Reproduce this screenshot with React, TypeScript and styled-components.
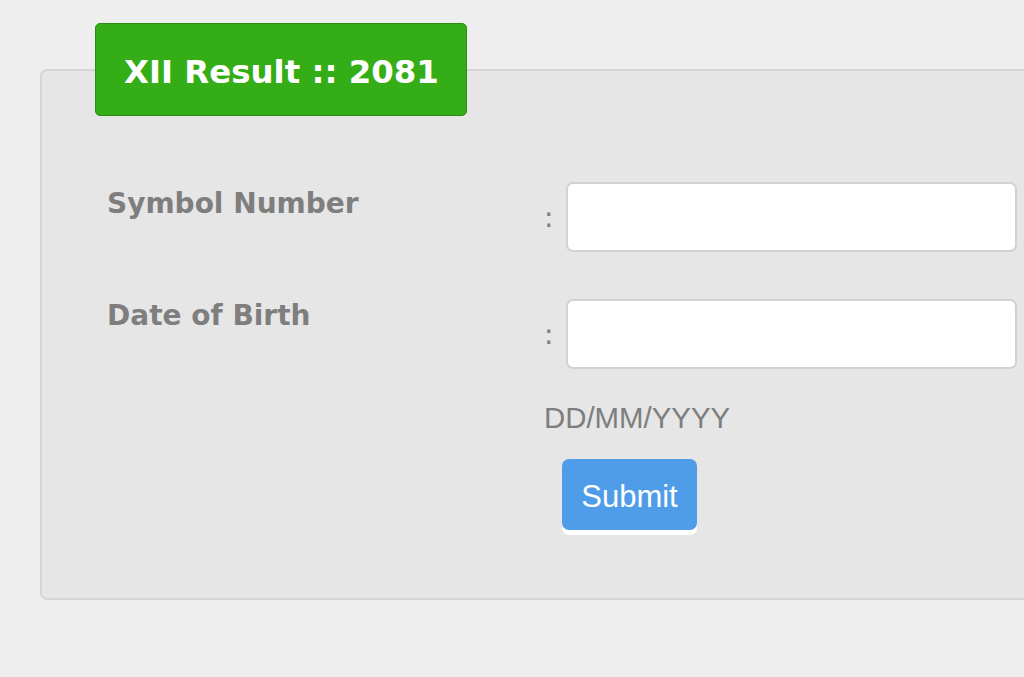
import styled, { createGlobalStyle } from "styled-components";

const GlobalStyle = createGlobalStyle`
   html, body {
      margin: 0;
      padding: 0;
      background: #eeeeee;
      overflow: hidden;
   }
   body {
      font-family: "Liberation Sans", Arial, sans-serif;
   }
`;

const Page = styled.div`
   width: 1024px;
   height: 677px;
   padding-top: 23px;
   box-sizing: border-box;
`;

const Box = styled.fieldset`
   margin: 0 0 0 40px;
   padding: 66px 0 68px 65px;
   width: 1100px;
   box-sizing: border-box;
   background: #e6e6e6;
   border: 2px solid #d5d5d5;
   border-radius: 7px;
   min-width: 0;
`;

const Title = styled.legend`
   margin-left: -12px;
   padding: 30px 27px 25px 28px;
   background: #35ad17;
   border: 1px solid #2a8c12;
   border-radius: 5px;
   color: #ffffff;
   font-family: "DejaVu Sans", Verdana, sans-serif;
   font-weight: bold;
   font-size: 32.4px;
   line-height: 36px;
   white-space: nowrap;
`;

const FormGrid = styled.div`
   display: grid;
   grid-template-columns: 437px 22px 451px;
   row-gap: 47px;
   align-items: start;
`;

const Label = styled.label<{ $offset: number }>`
   padding-top: ${(p) => p.$offset}px;
   color: #7e7e7e;
   font-family: "DejaVu Sans", Verdana, sans-serif;
   font-weight: bold;
   font-size: 28px;
   line-height: 34px;
`;

const Colon = styled.span`
   padding-top: 20px;
   color: #7e7e7e;
   font-family: "DejaVu Sans", Verdana, sans-serif;
   font-size: 28px;
   line-height: 32px;
`;

const Input = styled.input`
   display: block;
   width: 451px;
   height: 70px;
   box-sizing: border-box;
   background: #ffffff;
   border: 2px solid #d2d2d2;
   border-radius: 7px;
   padding: 0 12px;
   font-size: 26px;
   outline: none;
`;

const Actions = styled.div`
   grid-column: 2 / 4;
   margin-top: -15px;
   display: flex;
   flex-direction: column;
   align-items: flex-start;
`;

const Hint = styled.span`
   color: #7e7e7e;
   font-size: 29.4px;
   line-height: 34px;
`;

const SubmitButton = styled.button`
   margin: 24px 0 0 18px;
   width: 135px;
   height: 71px;
   padding: 4px 0 0;
   background: #4f9de9;
   color: #ffffff;
   border: none;
   border-radius: 7px;
   box-shadow: 0 5px 0 #ffffff;
   font-family: "Liberation Sans", Arial, sans-serif;
   font-size: 31px;
   cursor: pointer;
`;

export default function App() {
   return (
      <Page>
         <GlobalStyle />
         <Box>
            <Title>XII Result :: 2081</Title>
            <FormGrid>
               <Label $offset={5} htmlFor="symbol">
                  Symbol Number
               </Label>
               <Colon>:</Colon>
               <Input id="symbol" type="text" />

               <Label $offset={-2} htmlFor="dob">
                  Date of Birth
               </Label>
               <Colon>:</Colon>
               <Input id="dob" type="text" />

               <Actions>
                  <Hint>DD/MM/YYYY</Hint>
                  <SubmitButton type="button">Submit</SubmitButton>
               </Actions>
            </FormGrid>
         </Box>
      </Page>
   );
}
